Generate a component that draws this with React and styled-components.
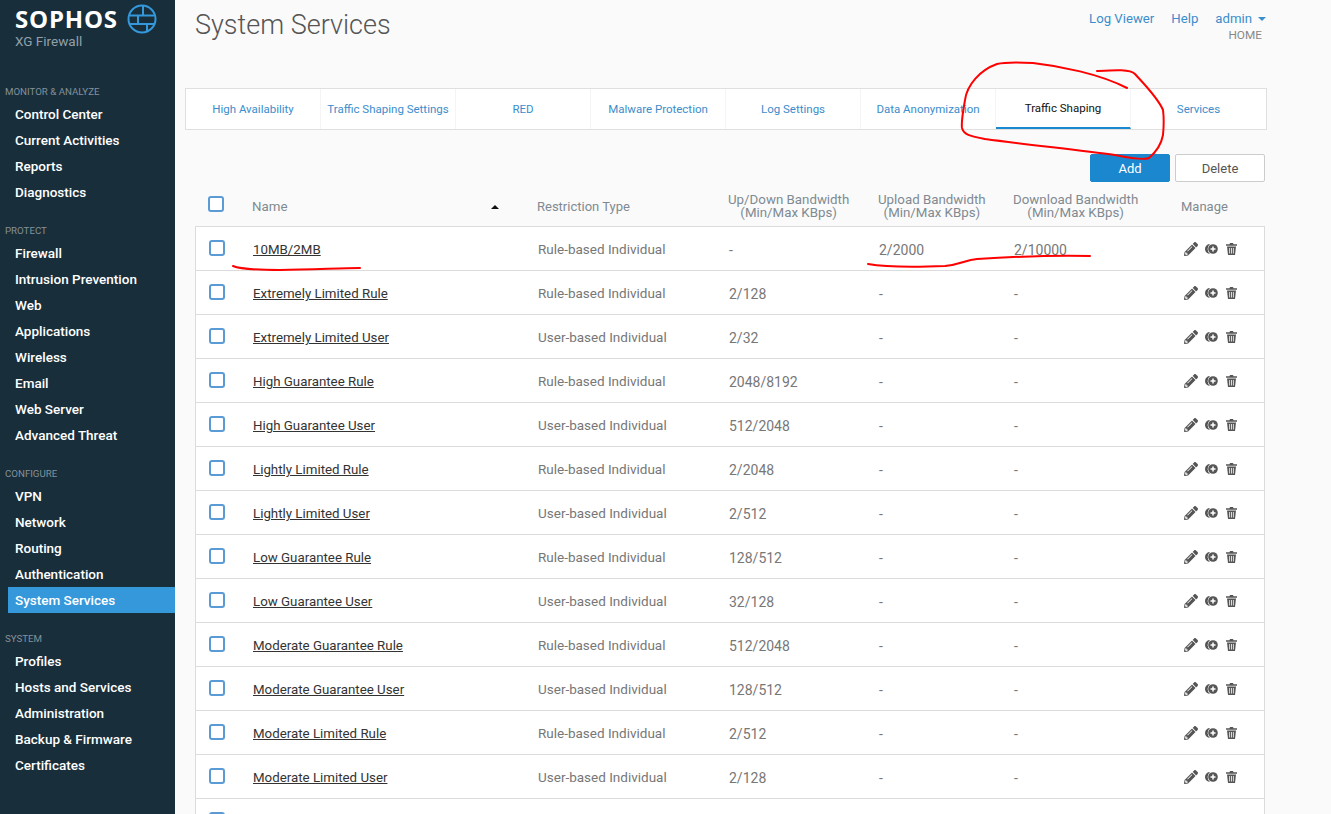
import React from 'react';
import styled, { createGlobalStyle } from 'styled-components';
import { FaPencilAlt } from 'react-icons/fa';

const NAV = [
  { title: 'MONITOR & ANALYZE', items: ['Control Center', 'Current Activities', 'Reports', 'Diagnostics'] },
  {
    title: 'PROTECT',
    items: ['Firewall', 'Intrusion Prevention', 'Web', 'Applications', 'Wireless', 'Email', 'Web Server', 'Advanced Threat'],
  },
  { title: 'CONFIGURE', items: ['VPN', 'Network', 'Routing', 'Authentication', 'System Services'] },
  { title: 'SYSTEM', items: ['Profiles', 'Hosts and Services', 'Administration', 'Backup & Firmware', 'Certificates'] },
];

const TABS = [
  'High Availability',
  'Traffic Shaping Settings',
  'RED',
  'Malware Protection',
  'Log Settings',
  'Data Anonymization',
  'Traffic Shaping',
  'Services',
];

const RULES = [
  ['10MB/2MB', 'Rule-based Individual', '-', '2/2000', '2/10000'],
  ['Extremely Limited Rule', 'Rule-based Individual', '2/128', '-', '-'],
  ['Extremely Limited User', 'User-based Individual', '2/32', '-', '-'],
  ['High Guarantee Rule', 'Rule-based Individual', '2048/8192', '-', '-'],
  ['High Guarantee User', 'User-based Individual', '512/2048', '-', '-'],
  ['Lightly Limited Rule', 'Rule-based Individual', '2/2048', '-', '-'],
  ['Lightly Limited User', 'User-based Individual', '2/512', '-', '-'],
  ['Low Guarantee Rule', 'Rule-based Individual', '128/512', '-', '-'],
  ['Low Guarantee User', 'User-based Individual', '32/128', '-', '-'],
  ['Moderate Guarantee Rule', 'Rule-based Individual', '512/2048', '-', '-'],
  ['Moderate Guarantee User', 'User-based Individual', '128/512', '-', '-'],
  ['Moderate Limited Rule', 'Rule-based Individual', '2/512', '-', '-'],
  ['Moderate Limited User', 'User-based Individual', '2/128', '-', '-'],
  ['', '', '', '', ''],
];

const Global = createGlobalStyle`
  html, body {
    margin: 0;
    height: 100%;
    overflow: hidden;
    background: #fafafa;
    font-family: 'Roboto', 'Liberation Sans', sans-serif;
  }
`;

const Page = styled.div`
  position: relative;
  display: flex;
  width: 1331px;
  height: 814px;
  overflow: hidden;
`;

const Sidebar = styled.aside`
  flex: none;
  width: 175px;
  height: 814px;
  background: #182e3b;
`;

const Brand = styled.div`
  height: 81px;
  padding: 5px 0 0 15px;
  box-sizing: border-box;
`;

const LogoRow = styled.div`
  display: flex;
  align-items: center;
  gap: 9px;
  height: 27px;
`;

const LogoWord = styled.span`
  color: #fff;
  font: 700 24px/27px 'Open Sans', sans-serif;
  letter-spacing: 0.8px;
`;

const Product = styled.div`
  margin-top: 1px;
  color: #93a0a8;
  font-size: 13.5px;
  line-height: 16px;
`;

const Section = styled.section`
  margin-bottom: 15px;
`;

const SectionTitle = styled.div`
  padding-left: 5px;
  height: 20px;
  color: #84919a;
  font-size: 9.7px;
  line-height: 22px;
`;

const NavItem = styled.div`
  margin-left: 8px;
  padding-left: 7px;
  height: 26px;
  color: #fff;
  font-size: 13.5px;
  font-weight: 500;
  line-height: 26px;
  background: ${(p) => (p.$active ? '#3498db' : 'transparent')};
`;

const Main = styled.main`
  flex: 1;
  min-width: 0;
`;

const Header = styled.header`
  display: flex;
  justify-content: space-between;
  width: 1071px;
  height: 88px;
  margin-left: 20px;
`;

const Title = styled.h1`
  margin: 8px 0 0;
  color: #555;
  font-size: 27px;
  font-weight: 300;
  line-height: 34px;
`;

const TopRight = styled.div`
  padding-top: 10px;
  text-align: right;
`;

const TopLinks = styled.div`
  display: flex;
  gap: 17px;
  color: #3b8dcb;
  font-size: 13.2px;
  line-height: 17px;
`;

const Caret = styled.span`
  display: inline-block;
  margin-left: 6px;
  vertical-align: 2px;
  border-left: 4px solid transparent;
  border-right: 4px solid transparent;
  border-top: 4px solid #3b8dcb;
`;

const Home = styled.div`
  margin: 0 4px 0 0;
  color: #888;
  font-size: 11.8px;
  line-height: 16px;
`;

const Tabs = styled.nav`
  display: flex;
  width: 1080px;
  height: 40px;
  margin-left: 10px;
  background: #fff;
  border: 1px solid #dfdfdf;
`;

const Tab = styled.div`
  flex: none;
  width: 135px;
  box-sizing: border-box;
  text-align: center;
  font-size: 11.5px;
  line-height: ${(p) => (p.$active ? '39px' : '41px')};
  white-space: nowrap;
  color: ${(p) => (p.$active ? '#111' : '#3b8dcb')};
  border-right: 1px solid #f4f4f4;
  border-bottom: ${(p) => (p.$active ? '2px solid #1a87cf' : 'none')};
  &:last-child {
    border-right: none;
  }
`;

const Actions = styled.div`
  display: flex;
  justify-content: flex-end;
  gap: 5px;
  width: 1070px;
  margin: 24px 0 0 20px;
`;

const Button = styled.button`
  width: ${(p) => (p.$primary ? '80px' : '90px')};
  height: 28px;
  padding: 0;
  border-radius: 2px;
  font: 13px 'Roboto', sans-serif;
  color: ${(p) => (p.$primary ? '#fff' : '#555')};
  background: ${(p) => (p.$primary ? '#1a87cf' : '#fff')};
  border: 1px solid ${(p) => (p.$primary ? '#1a87cf' : '#ccc')};
`;

const Table = styled.div`
  width: 1070px;
  margin-left: 20px;
`;

const HeadRow = styled.div`
  display: grid;
  grid-template-columns: 57px 285px 191px 150px 135px 168px 84px;
  align-items: center;
  height: 44px;
  color: #808a92;
  font-size: 13.3px;
  line-height: 13px;
`;

const HeadCell = styled.div`
  display: flex;
  flex-direction: column;
  align-items: ${(p) => (p.$center ? 'center' : 'flex-start')};
  padding-top: ${(p) => (p.$center ? '4px' : '5px')};
  ${(p) => (p.$center ? 'width: max-content;' : 'font-size: 13px;')}
`;

const NameHead = styled.div`
  display: flex;
  justify-content: space-between;
  align-items: center;
  padding: 5px 38px 0 0;
`;

const SortArrow = styled.span`
  border-left: 4px solid transparent;
  border-right: 4px solid transparent;
  border-bottom: 4px solid #111;
`;

const Rows = styled.div`
  background: #fff;
  border: 1px solid #dcdcdc;
  border-bottom: none;
`;

const Row = styled.div`
  display: grid;
  grid-template-columns: 57px 285px 191px 150px 135px 170px 80px;
  align-items: center;
  height: 42px;
  padding-top: 1px;
  border-bottom: 1px solid #dcdcdc;
  color: #777;
  font-size: 13.5px;
`;

const CheckCell = styled.div`
  padding-left: 13px;
  margin-top: -2px;
`;

const HeadCheckCell = styled.div`
  padding-left: 13px;
`;

const Check = styled.span`
  display: block;
  width: 12px;
  height: 12px;
  background: #fff;
  border: 2px solid #5b9bd5;
  border-radius: 3px;
`;

const NameLink = styled.span`
  color: #333;
  font-size: 13.3px;
  text-decoration: underline;
`;

const Num = styled.div`
  font-size: 14px;
  padding-top: 1px;
`;

const Manage = styled.div`
  display: flex;
  align-items: center;
  color: #555;
  svg + svg {
    margin-left: 7px;
  }
  svg:last-child {
    margin-left: 8px;
  }
`;

const Scribble = styled.svg`
  position: absolute;
  left: 0;
  top: 0;
  pointer-events: none;
`;

function SophosMark() {
  return (
    <svg width="30" height="30" viewBox="0 0 30 30" fill="none" stroke="#3498db" strokeWidth="2">
      <circle cx="15" cy="15" r="13.5" />
      <path d="M3 11.5h24M3 20h24M16 2v9.5M11 11.5v8.5M20 20v8" />
    </svg>
  );
}

function CloneIcon() {
  return (
    <svg width="13" height="10" viewBox="0 0 13 10">
      <path d="M5 0A5 5 0 0 0 5 10 7 7 0 0 1 2.6 5 7 7 0 0 1 5 0Z" fill="#555" />
      <circle cx="8" cy="5" r="4.8" fill="#555" />
      <path d="M8 2.5v5M5.5 5h5" stroke="#fff" strokeWidth="1.5" />
    </svg>
  );
}

function TrashIcon() {
  return (
    <svg width="11" height="12" viewBox="0 0 11 12">
      <path d="M0 1.2h3.5L4 0h3l.5 1.2H11v1.6H0Z" fill="#555" />
      <path d="M1 3.6h9L9 12H2Z" fill="#555" />
      <path d="M3.6 5v5.5M5.5 5v5.5M7.4 5v5.5" stroke="#fff" strokeWidth="0.8" />
    </svg>
  );
}

export default function App() {
  return (
    <Page>
      <Global />
      <Sidebar>
        <Brand>
          <LogoRow>
            <LogoWord>SOPHOS</LogoWord>
            <SophosMark />
          </LogoRow>
          <Product>XG Firewall</Product>
        </Brand>
        {NAV.map((section) => (
          <Section key={section.title}>
            <SectionTitle>{section.title}</SectionTitle>
            {section.items.map((item) => (
              <NavItem key={item} $active={item === 'System Services'}>
                {item}
              </NavItem>
            ))}
          </Section>
        ))}
      </Sidebar>

      <Main>
        <Header>
          <Title>System Services</Title>
          <TopRight>
            <TopLinks>
              <span>Log Viewer</span>
              <span>Help</span>
              <span>
                admin
                <Caret />
              </span>
            </TopLinks>
            <Home>HOME</Home>
          </TopRight>
        </Header>

        <Tabs>
          {TABS.map((tab) => (
            <Tab key={tab} $active={tab === 'Traffic Shaping'}>
              {tab}
            </Tab>
          ))}
        </Tabs>

        <Actions>
          <Button $primary>Add</Button>
          <Button>Delete</Button>
        </Actions>

        <Table>
          <HeadRow>
            <HeadCheckCell>
              <Check />
            </HeadCheckCell>
            <NameHead>
              <span>Name</span>
              <SortArrow />
            </NameHead>
            <HeadCell>Restriction Type</HeadCell>
            <HeadCell $center>
              <span>Up/Down Bandwidth</span>
              <span>(Min/Max KBps)</span>
            </HeadCell>
            <HeadCell $center>
              <span>Upload Bandwidth</span>
              <span>(Min/Max KBps)</span>
            </HeadCell>
            <HeadCell $center>
              <span>Download Bandwidth</span>
              <span>(Min/Max KBps)</span>
            </HeadCell>
            <HeadCell>Manage</HeadCell>
          </HeadRow>
          <Rows>
            {RULES.map((rule, i) => (
              <Row key={i}>
                <CheckCell>
                  <Check />
                </CheckCell>
                <div>
                  <NameLink>{rule[0]}</NameLink>
                </div>
                <div>{rule[1]}</div>
                <Num>{rule[2]}</Num>
                <Num>{rule[3]}</Num>
                <Num>{rule[4]}</Num>
                <Manage>
                  <FaPencilAlt size={14} />
                  <CloneIcon />
                  <TrashIcon />
                </Manage>
              </Row>
            ))}
          </Rows>
        </Table>
      </Main>

      <Scribble width="1331" height="814" fill="none" stroke="#f00" strokeWidth="2" strokeLinecap="round" strokeLinejoin="round">
        <path d="M1127 88C1100 74 1060 66 1033 63C1015 62 1005 62 997 64C980 70 967 85 965 100C963 112 961 122 962 128C964 135 970 136 985 139C1030 145 1080 150 1115 155C1130 158 1145 160 1149 158C1156 152 1161 146 1163 135C1164 125 1164 118 1163 110C1158 98 1145 85 1135 74C1130 69 1115 70 1097 71" />
        <path d="M233 266C240 269 260 270 280 270C310 270 340 268 360 268" />
        <path d="M868 264C885 267 920 267 945 266C962 264 965 260 977 259C1010 257 1060 255 1090 256" />
      </Scribble>
    </Page>
  );
}
